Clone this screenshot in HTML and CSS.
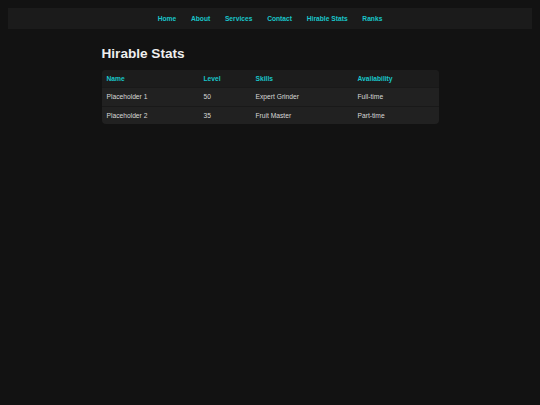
FILE: index.html
```html
<!DOCTYPE html>
<html lang="en">
<head>
<meta charset="utf-8">
<title>Hirable Stats</title>
<link rel="stylesheet" href="styles.css">
</head>
<body>
<nav class="nav">
  <a href="#">Home</a>
  <a href="#">About</a>
  <a href="#">Services</a>
  <a href="#">Contact</a>
  <a href="#">Hirable Stats</a>
  <a href="#">Ranks</a>
</nav>
<main class="container">
  <h1 class="title">Hirable Stats</h1>
  <table class="stats">
    <thead>
      <tr><th class="c-name">Name</th><th class="c-level">Level</th><th class="c-skills">Skills</th><th class="c-avail">Availability</th></tr>
    </thead>
    <tbody>
      <tr><td>Placeholder 1</td><td>50</td><td>Expert Grinder</td><td>Full-time</td></tr>
      <tr><td>Placeholder 2</td><td>35</td><td>Fruit Master</td><td>Part-time</td></tr>
    </tbody>
  </table>
</main>
</body>
</html>
```
FILE: styles.css
```css
html, body {
  background: #121212;
}
body {
  margin: 8px;
  font-family: "Liberation Sans", Arial, sans-serif;
  font-size: 6.7px;
  color: #e0e0e0;
}
.nav {
  background: #1b1b1b;
  display: flex;
  justify-content: center;
  gap: 14.7px;
  padding: 6.5px 0;
  line-height: 7.7px;
}
.nav a {
  color: #19c6ca;
  font-weight: bold;
  text-decoration: none;
}
.container {
  width: 337px;
  margin: 0 auto;
  padding-top: 17.6px;
}
.title {
  margin: 0 0 8px 0;
  font-size: 13.6px;
  line-height: 15.4px;
  color: #eeeeee;
  font-weight: bold;
}
.stats {
  width: 100%;
  border-collapse: separate;
  border-spacing: 0;
  background: #212121;
  border-radius: 4px;
  overflow: hidden;
}
.stats th, .stats td {
  text-align: left;
  padding: 4.8px 5px;
  line-height: 7.7px;
}
.stats th {
  background: #1c1c1c;
  color: #19c6ca;
  font-weight: bold;
}
.stats td {
  border-top: 1px solid #191919;
  color: #d8d8d8;
  padding: 5px 5px;
}
.c-name { width: 87px; }
.c-level { width: 42px; }
.c-skills { width: 92px; }
```
